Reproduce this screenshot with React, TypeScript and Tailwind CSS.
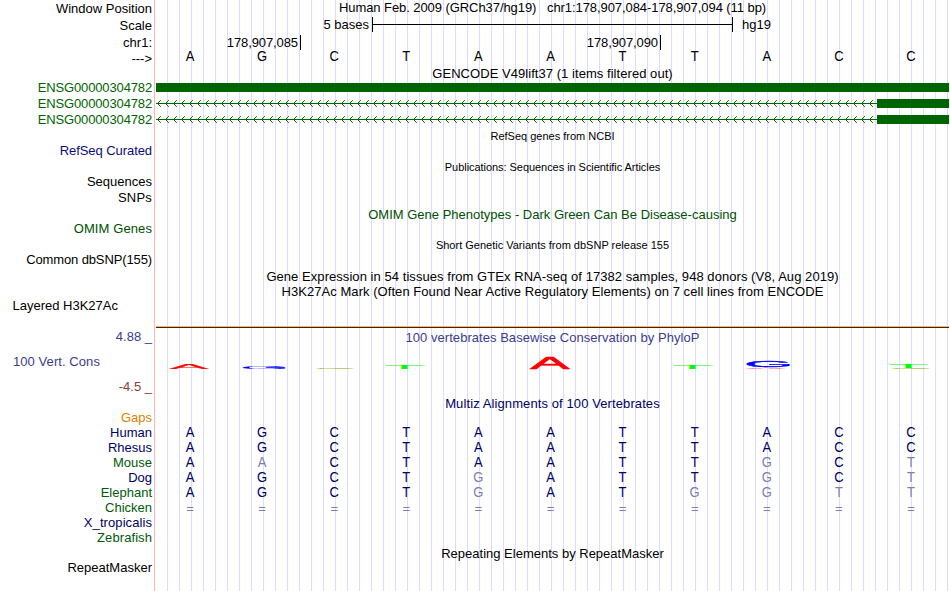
import { ReactNode } from "react"

interface Line {
  text: string
  h: number
  color?: string
  className?: string
}

// Heights are the distance from the previous line's bottom edge.
const LABELS: Line[] = [
  { text: "Window Position", h: 16 },
  { text: "Scale", h: 17 },
  { text: "chr1:", h: 17 },
  { text: "--->", h: 16 },
  { text: "ENSG00000304782", h: 29, color: "text-[#006400]", className: "pr-[2px] tracking-[-0.14px]" },
  { text: "ENSG00000304782", h: 16, color: "text-[#006400]", className: "pr-[2px] tracking-[-0.14px]" },
  { text: "ENSG00000304782", h: 16, color: "text-[#006400]", className: "pr-[2px] tracking-[-0.14px]" },
  { text: "RefSeq Curated", h: 31, color: "text-[#0c0c78]", className: "pr-[2px] tracking-[-0.07px]" },
  { text: "Sequences", h: 31 },
  { text: "SNPs", h: 16, className: "pr-[2px] tracking-[0.2px]" },
  { text: "OMIM Genes", h: 31, color: "text-[#005000]", className: "pr-[2px] tracking-[0.1px]" },
  { text: "Common dbSNP(155)", h: 31, className: "pr-[2px] tracking-[-0.12px]" },
  { text: "Layered H3K27Ac", h: 46, className: "pr-[36px]" },
  { text: "4.88 _", h: 31, color: "text-[#3c3c8c]" },
  { text: "100 Vert. Cons", h: 25, color: "text-[#3c3c8c]", className: "pr-[54px] tracking-[0.07px]" },
  { text: "-4.5 _", h: 25, color: "text-[#8c3c3c]" },
  { text: "Gaps", h: 31, color: "text-[#e08000]" },
  { text: "Human", h: 15, color: "text-[#000064]" },
  { text: "Rhesus", h: 15, color: "text-[#000064]" },
  { text: "Mouse", h: 15, color: "text-[#005a0a]" },
  { text: "Dog", h: 15, color: "text-[#000064]" },
  { text: "Elephant", h: 15, color: "text-[#005a0a]" },
  { text: "Chicken", h: 15, color: "text-[#005a0a]" },
  { text: "X_tropicalis", h: 15, color: "text-[#000064]", className: "pr-[2px] tracking-[0.08px]" },
  { text: "Zebrafish", h: 15, color: "text-[#005a0a]", className: "pr-[2px] tracking-[0.08px]" },
  { text: "RepeatMasker", h: 30 },
]

const ALIGNMENT = ["AGCTAATTACC", "AGCTAATTACC", "AaCTAATTgCt", "AGCTgATTgCt", "AGCTgATggtt", "==========="]

// Glyph extents in em units, used to stretch a letter over a box.
const GLYPHS: Record<string, { x0: number; x1: number; h: number }> = {
  A: { x0: 0.002, x1: 0.665, h: 0.688 },
  C: { x0: 0.05, x1: 0.687, h: 0.7 },
  G: { x0: 0.05, x1: 0.72, h: 0.71 },
  T: { x0: 0.021, x1: 0.59, h: 0.688 },
}

const LOGO = [
  { base: "A", x: 13.6, w: 38.8, top: 14, bottom: 19, fill: "#ff0000", bold: 2 },
  { base: "G", x: 87, w: 42.8, top: 16.1, bottom: 19, fill: "#0000ff", bold: 1 },
  { base: "C", x: 159.7, w: 40, top: 18, bottom: 19, fill: "#a0a000", bold: 0 },
  { base: "T", x: 229.3, w: 38, top: 15, bottom: 19, fill: "#00ff00", bold: 0 },
  { base: "A", x: 374.3, w: 39, top: 7.4, bottom: 18.8, fill: "#ff0000", bold: 3 },
  { base: "T", x: 517.3, w: 38, top: 15, bottom: 19, fill: "#00ff00", bold: 0 },
  { base: "A", x: 590, w: 39.4, top: 17.4, bottom: 19, fill: "#ff0000", bold: 2 },
  { base: "G", x: 591.5, w: 42.2, top: 10.2, bottom: 16.9, fill: "#0000ff", bold: 3 },
  { base: "C", x: 735.3, w: 40, top: 18, bottom: 19, fill: "#a0a000", bold: 0 },
  { base: "T", x: 733.3, w: 38, top: 14, bottom: 18, fill: "#00ff00", bold: 0 },
]

interface TitleProps {
  h: number
  small?: boolean
  color?: string
  tracking?: string
  children: ReactNode
}

function Title({ h, small, color = "text-black", tracking = "", children }: TitleProps) {
  return (
    <div className={`flex items-end justify-center whitespace-pre ${small ? "text-[11px]" : "text-[13px]"} ${color} ${tracking}`} style={{ height: h }}>
      <span>{children}</span>
    </div>
  )
}

function Bases({ seq, h, color }: { seq: string; h: number; color: string }) {
  return (
    <div className="grid grid-cols-11 items-end text-center -ml-[2px] mr-[2px]" style={{ height: h }}>
      {seq.split("").map((b, i) => (
        <span key={i} className={`${b === "=" ? "" : "origin-[50%_80%] scale-y-[1.1]"} ${b === "=" || b !== b.toUpperCase() ? "text-[#7d7daf]" : color}`}>{b.toUpperCase()}</span>
      ))}
    </div>
  )
}

function Intron() {
  return (
    <div className="flex items-center h-[9px] mt-[7px]">
      <svg className="w-[721px] h-[9px]" viewBox="0 0 721 9" stroke="#006400" fill="none">
        <path d="M0 4.5H721" />
        {Array.from({ length: 90 }).map((_, i) => (
          <path key={i} d={`M${i * 8 + 4.8} 1.2l-3.3 3.3l3.3 3.3`} />
        ))}
      </svg>
      <div className="w-[72px] h-[9px] bg-[#006400]" />
    </div>
  )
}

function Logo() {
  return (
    <svg className="block w-[793px] h-[22px]" viewBox="0 0 793 22" fontFamily="Liberation Sans, Arial, sans-serif" fontSize="100">
      {LOGO.map((l, i) => {
        const g = GLYPHS[l.base]
        const sx = l.w / ((g.x1 - g.x0) * 100)
        const sy = (l.bottom - l.top) / (g.h * 100)
        return (
          <text key={i} fill={l.fill} stroke={l.fill} strokeWidth={l.bold} transform={`translate(${l.x - g.x0 * 100 * sx} ${l.bottom}) scale(${sx} ${sy})`}>{l.base}</text>
        )
      })}
    </svg>
  )
}

export default function App() {
  return (
    <div className="flex w-[950px] h-[591px] overflow-hidden bg-white text-black text-[13px] leading-[15px] font-['Liberation_Sans',Arial,sans-serif]">
      <div className="w-[155px] shrink-0 border-r border-[#ffb4b4]">
        {LABELS.map((l, i) => (
          <div key={i} className={`flex items-end justify-end whitespace-nowrap ${l.className ?? "pr-[2px]"} ${l.color ?? ""}`} style={{ height: l.h }}>{l.text}</div>
        ))}
      </div>
      <div className="w-[793px] ml-px shrink-0 bg-[repeating-linear-gradient(90deg,transparent_0_11px,#dcdcff_11px_12px)]">
        <Title h={15} tracking="tracking-[-0.07px]">{"Human Feb. 2009 (GRCh37/hg19)   chr1:178,907,084-178,907,094 (11 bp)"}</Title>
        <div className="flex items-end h-[17px]">
          <span className="w-[213px] text-right">5 bases</span>
          <div className="ml-[3px] w-[361px] h-[15px] border-x border-black flex items-center"><div className="w-full h-px bg-black" /></div>
          <span className="ml-[9px]">hg19</span>
        </div>
        <div className="flex items-end h-[18px] tracking-[-0.1px]">
          <span className="w-[145px] pr-[2px] h-[15px] border-r border-black text-right">178,907,085</span>
          <span className="w-[360px] pr-[2px] h-[15px] border-r border-black text-right">178,907,090</span>
        </div>
        <div className="-mt-px"><Bases seq="AGCTAATTACC" h={15} color="text-black" /></div>
        <Title h={17} tracking="tracking-[0.05px]">GENCODE V49lift37 (1 items filtered out)</Title>
        <div className="mt-[2px] h-[9px] bg-[#006400]" />
        <Intron />
        <Intron />
        <Title h={20} small>RefSeq genes from NCBI</Title>
        <Title h={31} small tracking="tracking-[-0.05px]">Publications: Sequences in Scientific Articles</Title>
        <Title h={47} color="text-[#005000]">OMIM Gene Phenotypes - Dark Green Can Be Disease-causing</Title>
        <Title h={31} small>Short Genetic Variants from dbSNP release 155</Title>
        <Title h={31} tracking="tracking-[0.055px]">Gene Expression in 54 tissues from GTEx RNA-seq of 17382 samples, 948 donors (V8, Aug 2019)</Title>
        <Title h={15} tracking="tracking-[0.05px]">H3K27Ac Mark (Often Found Near Active Regulatory Elements) on 7 cell lines from ENCODE</Title>
        <div className="mt-[27px] h-[2px] bg-[#402020] border-t border-[#ffb74a]" />
        <Title h={17} color="text-[#3c3c8c]" tracking="tracking-[0.04px]">100 vertebrates Basewise Conservation by PhyloP</Title>
        <div className="mt-[5px]"><Logo /></div>
        <Title h={39} color="text-[#000064]" tracking="tracking-[0.1px]">Multiz Alignments of 100 Vertebrates</Title>
        <div className="pt-[14px]">
          {ALIGNMENT.map((seq, i) => <Bases key={i} seq={seq} h={seq[0] === "=" ? 16 : 15} color="text-[#000064]" />)}
        </div>
        <Title h={45}>Repeating Elements by RepeatMasker</Title>
      </div>
    </div>
  )
}
